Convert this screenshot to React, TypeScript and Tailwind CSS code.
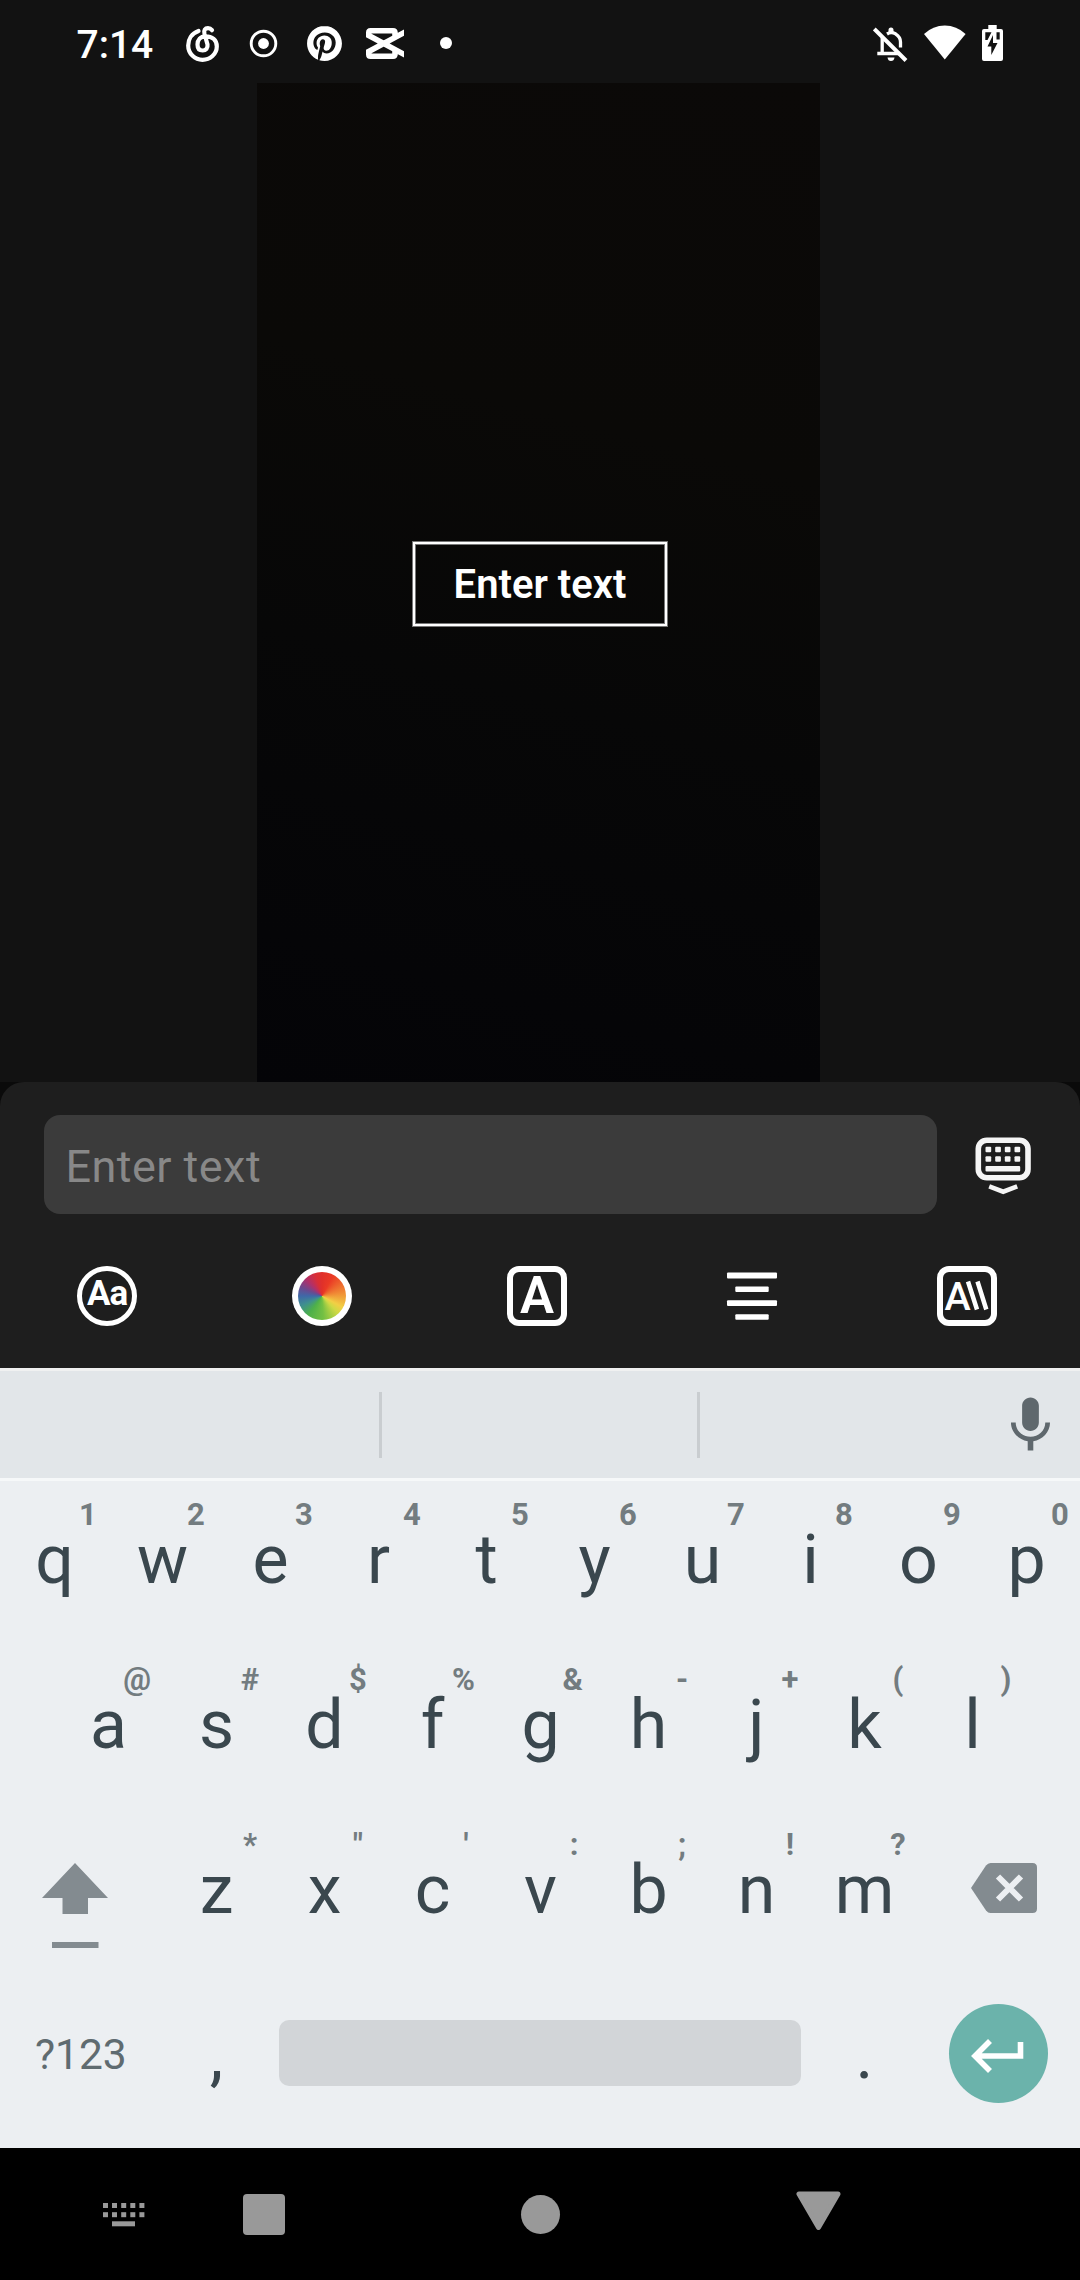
import React from "react";
import { SiPinterest } from "react-icons/si";
import { MdKeyboardVoice } from "react-icons/md";

function MusicIcon() {
  return (
    <svg width="33" height="36" viewBox="0 0 33 36" fill="none" stroke="#fff" strokeWidth="4.200">
      <path
        d="M12.500 5C5.500 7.500 2.200 13.500 2.200 19.500C2.200 28 9 33.800 16.500 33.800S30.800 28 30.800 20.500C30.800 14 26 10.300 19.500 10.300C14.500 10.300 11.500 14 11.500 18.500C11.500 22.500 13.500 24.500 16.700 24.500S22 22 21.500 18.500L18.500 8C17.500 4 19 2.200 22 2.200C24 2.200 25 3 26 4.200"
        strokeLinecap="round"
      />
    </svg>
  );
}

function CapCutIcon() {
  return (
    <svg width="38" height="31" viewBox="0 0 38 31" fill="none" stroke="#fff" strokeWidth="5.600">
      <path d="M29 8V5Q29 2.800 27 2.800H4.500Q2.800 2.800 2.800 4.500V7.500L42 28.500M29 23v3Q29 28.200 27 28.200H4.500Q2.800 28.200 2.800 26.500V23.500L42 2.500" />
    </svg>
  );
}

function BellOffIcon() {
  return (
    <svg width="35" height="35" viewBox="0 0 35 35" fill="none" stroke="#fff">
      <path d="M9.200 10.500V26M4.300 26.500H27M14 7Q18 4.500 22.500 6.800Q27.500 10 27.500 15V20.500" strokeWidth="3.300" />
      <path d="M1.300 2L33 33.500" strokeWidth="4" />
      <path d="M15.500 5V3Q15.500 0.500 18 0.500T20.500 3V5ZM14.500 30.500H21.500Q21 34 18 34T14.500 30.500Z" fill="#fff" stroke="none" />
    </svg>
  );
}

function StatusBar() {
  return (
    <header className="flex h-[83px] items-start text-white">
      <span className="mt-[20.500px] ml-[76.500px] w-[109.500px] text-[39px] leading-[48px] font-medium">7:14</span>
      <div className="mt-[26px]"><MusicIcon /></div>
      <svg className="mt-[29px] ml-[30px]" width="29" height="29" viewBox="0 0 29 29">
        <circle cx="14.500" cy="14.500" r="12.300" fill="none" stroke="#fff" strokeWidth="2.900" />
        <circle cx="14.500" cy="14.500" r="5.400" fill="#fff" />
      </svg>
      <SiPinterest className="mt-[26px] ml-[29px] size-[35px]" />
      <div className="mt-[28px] ml-[24px]"><CapCutIcon /></div>
      <div className="mt-[37px] ml-[36px] size-[12px] rounded-full bg-white" />
      <div className="mr-[77px] ml-auto flex items-start">
        <div className="mt-[27px]"><BellOffIcon /></div>
        <svg className="mt-[25px] ml-[16px]" width="42" height="35" viewBox="0 0 42 35">
          <path d="M0 9Q9 0.500 20.800 0.500T41.600 9L20.800 34.500Z" fill="#fff" />
        </svg>
        <svg className="mt-[25px] ml-[16px]" width="21" height="36" viewBox="0 0 21 36">
          <path d="M6.300 0h8.400v4h4.300q2 0 2 2v28q0 2-2 2H2q-2 0-2-2V6q0-2 2-2h4.300z" fill="#fff" />
          <path d="M3.300 7.300h6.200l-4 7.700H3.300zM14.500 7.300h3.200v7.200h-3.200zM11 10v8H15.500L9.300 30V21.500H5.500z" fill="#121212" />
        </svg>
      </div>
    </header>
  );
}

function Preview() {
  return (
    <main className="ml-[257px] flex h-[999px] w-[563px] items-start justify-center bg-[linear-gradient(195deg,#0b0908_0%,#0a0907_35%,#070707_60%,#040407_100%)]">
      <div className="mt-[458px] mr-[-3px] border border-[#777]">
        <div className="border-2 border-white">
          <div className="flex h-[80px] w-[250px] items-center justify-center border border-[#777] pt-[2px] text-[40px] font-[560] text-white">Enter text</div>
        </div>
      </div>
    </main>
  );
}

function HideKeyboardIcon() {
  return (
    <svg width="57" height="58" viewBox="0 0 57 58" fill="#f5f5f5">
      <rect x="3.300" y="3.300" width="49.700" height="37.500" rx="8.500" fill="none" stroke="#f5f5f5" strokeWidth="5.600" />
      {[10.500, 20.200, 29.800, 39.500].map((x) => (
        <g key={x}>
          <rect x={x} y="9.700" width="5.700" height="5.500" rx="1" />
          <rect x={x} y="19.200" width="5.700" height="5.500" rx="1" />
        </g>
      ))}
      <rect x="10.500" y="28.900" width="34.700" height="5.600" rx="1" />
      <path d="M14.200 49.400L28.200 54.700 42.200 49.400" fill="none" stroke="#f5f5f5" strokeWidth="4.600" />
    </svg>
  );
}

function Tools() {
  return (
    <div className="mt-[52px] ml-[-0.500px] grid w-[1075px] grid-cols-5 justify-items-center text-white">
      <div className="flex size-[60px] items-center justify-center rounded-full border-[5px] border-white pb-[3px] text-[35px] font-bold tracking-[-1px]">Aa</div>
      <div className="size-[60px] rounded-full bg-white p-[6px]">
        <div className="size-full rounded-full bg-[conic-gradient(#e0302a,#ea3a25_8%,#f08a35_22%,#f2cf45_33%,#cfd945_38%,#74c043_49%,#4db04a_60%,#3f8f8f_68%,#3f68a8_75%,#6a4a90_81%,#b0306a_88%,#d82e38_95%,#e0302a)]" />
      </div>
      <div className="flex size-[60px] items-center justify-center rounded-[12px] border-[6px] border-white text-[51px] font-semibold">A</div>
      <svg width="60" height="60" viewBox="0 0 60 60" fill="#fff">
        <rect x="5" y="6.400" width="50" height="6" rx="1" />
        <rect x="13.300" y="20.500" width="33.400" height="5.600" rx="1" />
        <rect x="5" y="34.200" width="50" height="5.800" rx="1" />
        <rect x="13.300" y="48.200" width="33.400" height="5.600" rx="1" />
      </svg>
      <svg width="60" height="60" viewBox="0 0 60 60" fill="none" stroke="#fff">
        <rect x="3" y="3" width="54" height="54" rx="9" strokeWidth="6" />
        <text x="20.600" y="43.500" textAnchor="middle" fill="#fff" stroke="none" className="text-[39.500px] font-medium">A</text>
        <path d="M31 15.500L40 43.500M40.500 15.500L49.300 43.500" strokeWidth="4.500" />
      </svg>
    </div>
  );
}

function EditorPanel() {
  return (
    <div className="bg-[#0a0a0a]">
      <section className="h-[286px] rounded-t-[24px] bg-[#1e1e1e] pt-[33px]">
        <div className="flex items-start pl-[44px]">
          <div className="h-[99px] w-[893px] rounded-[16px] bg-[#3b3b3b] pt-[25.500px] pl-[21.500px] text-[45px] leading-[52px] tracking-[0.450px] text-[#888]">Enter text</div>
          <div className="mt-[22px] ml-[38px]"><HideKeyboardIcon /></div>
        </div>
        <Tools />
      </section>
    </div>
  );
}

function Key({ label, hint }: { label: string; hint?: string }) {
  return (
    <div className="relative w-[108px] pt-[39px] pl-px text-center text-[68px] leading-[80px] text-[#3a474e]">
      {label}
      {hint && <span className="absolute top-[16px] right-[11px] min-w-[18px] text-[31px] leading-[36px] font-bold text-[#737c80]">{hint}</span>}
    </div>
  );
}

function KeyRow({ letters, hints }: { letters: string; hints: string }) {
  return (
    <>
      {letters.split("").map((c, i) => (
        <Key key={c} label={c} hint={hints[i]} />
      ))}
    </>
  );
}

function Keyboard() {
  return (
    <section className="h-[780px] bg-[#eceff2]">
      <div className="flex h-[113px] items-start border-y-[3px] border-t-[#f0f1f1] border-b-[#f6f8f9] bg-[#e2e6e9]">
        <div className="mt-[21px] ml-[379px] h-[66px] w-[3px] bg-[#c9cdd0]" />
        <div className="mt-[21px] ml-[315px] h-[66px] w-[3px] bg-[#c9cdd0]" />
        <MdKeyboardVoice className="mt-[18px] ml-[297px] size-[67px] text-[#5f686d]" />
      </div>
      <div className="flex h-[165px]"><KeyRow letters="qwertyuiop" hints="1234567890" /></div>
      <div className="flex h-[165px] pl-[54px]"><KeyRow letters="asdfghjkl" hints="@#$%&-+()" /></div>
      <div className="flex h-[165px]">
        <div className="w-[162px] pt-[52px] pl-[42px]">
          <svg width="66" height="86" viewBox="0 0 66 86" fill="#838b90">
            <path d="M33 0L66 35H46V51H20.500V35H0ZM10 79h46.500v6H10z" />
          </svg>
        </div>
        <KeyRow letters="zxcvbnm" hints={"*\"':;!?"} />
        <div className="pt-[52px] pl-[53px]">
          <svg width="66" height="50" viewBox="0 0 66 50">
            <path d="M0 25L15 2.500Q17 0 19.500 0H61.500Q66 0 66 4.500V45.500Q66 50 61.500 50H19.500Q17 50 15 47.500Z" fill="#838b90" />
            <path d="M27 13.500L50 36.500M50 13.500L27 36.500" stroke="#eceff2" strokeWidth="6" />
          </svg>
        </div>
      </div>
      <div className="flex h-[165px] items-start">
        <div className="w-[162px] pt-[54px] pl-[35px] text-[42.500px] leading-[50px] text-[#5f6b70]">?123</div>
        <Key label="," />
        <div className="mt-[44px] ml-[9px] h-[66px] w-[522px] rounded-[10px] bg-[#d2d5d8]" />
        <div className="ml-[9px]"><Key label="." /></div>
        <div className="mt-[28px] ml-[31px] size-[99px] rounded-full bg-[#6bb3ab]">
          <svg width="99" height="99" viewBox="0 0 99 99" fill="none" stroke="#fff" strokeWidth="5.600">
            <path d="M71.500 38V52H26.500M41 37L26 52 41 67" />
          </svg>
        </div>
      </div>
    </section>
  );
}

function NavBar() {
  return (
    <nav className="flex h-[132px] items-start bg-black">
      <svg className="mt-[55px] ml-[103px]" width="42" height="24" viewBox="0 0 42 24" fill="#999">
        {[0, 9, 18.200, 27.300, 36.400].map((x) => (
          <g key={x}>
            <rect x={x} y="0" width="5" height="5" />
            <rect x={x} y="9.200" width="5" height="5" />
          </g>
        ))}
        <rect x="9" y="18.300" width="23" height="5" />
      </svg>
      <div className="mt-[46px] ml-[98px] h-[41px] w-[42px] rounded-[4px] bg-[#999]" />
      <div className="mt-[47px] ml-[236px] size-[39px] rounded-full bg-[#999]" />
      <svg className="mt-[43px] ml-[236px]" width="45" height="40" viewBox="0 0 45 40">
        <path d="M3 3H42L22.500 36.500Z" fill="#999" stroke="#999" strokeWidth="5" strokeLinejoin="round" />
      </svg>
    </nav>
  );
}

export default function App() {
  return (
    <div className="h-[2280px] w-[1080px] overflow-hidden bg-[#121212] font-['Roboto',sans-serif]">
      <StatusBar />
      <Preview />
      <EditorPanel />
      <Keyboard />
      <NavBar />
    </div>
  );
}
